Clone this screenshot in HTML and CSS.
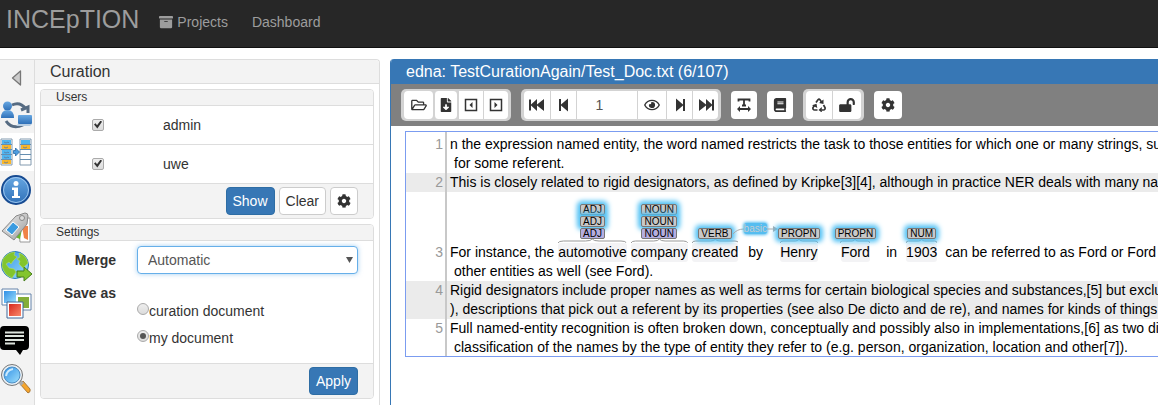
FILE: index.html
```html
<!DOCTYPE html>
<html lang="en">
<head>
<meta charset="utf-8">
<title>INCEpTION - Curation</title>
<link rel="stylesheet" href="styles.css">
</head>
<body>
<svg class="defs" aria-hidden="true">
  <defs>
    <linearGradient id="blue" x1="0" y1="0" x2="0" y2="1"><stop offset="0" stop-color="#68a8e2"/><stop offset="1" stop-color="#2f70b8"/></linearGradient>
    <linearGradient id="sky" x1="0" y1="0" x2="1" y2="1"><stop offset="0" stop-color="#2f8fe6"/><stop offset="1" stop-color="#9fe0fb"/></linearGradient>
    <linearGradient id="steel" x1="0" y1="0" x2="1" y2="1"><stop offset="0" stop-color="#f2f2f2"/><stop offset="1" stop-color="#9a9a9a"/></linearGradient>
    <linearGradient id="red" x1="0" y1="0" x2="1" y2="1"><stop offset="0" stop-color="#d8281c"/><stop offset="1" stop-color="#f98a6c"/></linearGradient>
  </defs>
  <symbol id="cog" viewBox="0 0 512 512"><path d="M487.4 315.7l-42.6-24.6c4.3-23.2 4.3-47 0-70.2l42.6-24.6c4.9-2.8 7.1-8.6 5.5-14-11.1-35.6-30-67.8-54.7-94.6-3.8-4.1-10-5.1-14.8-2.3L380.8 110c-17.9-15.4-38.5-27.3-60.8-35.1V25.8c0-5.6-3.9-10.5-9.4-11.7-36.7-8.2-74.3-7.8-109.2 0-5.5 1.2-9.4 6.1-9.4 11.7V75c-22.2 7.9-42.8 19.8-60.8 35.1L88.7 85.5c-4.9-2.8-11-1.9-14.8 2.3-24.7 26.7-43.6 58.9-54.7 94.6-1.7 5.4.6 11.2 5.5 14L67.3 221c-4.3 23.2-4.3 47 0 70.2l-42.6 24.6c-4.9 2.8-7.1 8.6-5.5 14 11.1 35.6 30 67.8 54.7 94.6 3.8 4.1 10 5.1 14.8 2.3l42.6-24.6c17.9 15.4 38.5 27.3 60.8 35.1v49.2c0 5.6 3.9 10.5 9.4 11.7 36.7 8.2 74.3 7.8 109.2 0 5.5-1.2 9.4-6.1 9.4-11.7v-49.2c22.2-7.9 42.8-19.8 60.8-35.1l42.6 24.6c4.9 2.8 11 1.9 14.8-2.3 24.7-26.7 43.6-58.9 54.7-94.6 1.5-5.5-.7-11.3-5.6-14.1zM256 336c-44.1 0-80-35.9-80-80s35.9-80 80-80 80 35.9 80 80-35.9 80-80 80z"/></symbol>
  <symbol id="brace" viewBox="0 0 100 5" preserveAspectRatio="none"><path vector-effect="non-scaling-stroke" fill="none" d="M0 5Q1 2.500 8 2.500H40Q48 2.500 50 0Q52 2.500 60 2.500H92Q99 2.500 100 5"/></symbol>
</svg>

<header class="topbar">
  <a class="brand" href="#">INCEpTION</a>
  <nav class="topnav">
    <a href="#"><svg class="icon" viewBox="0 0 512 512"><path d="M32 448c0 17.7 14.3 32 32 32h384c17.700 0 32-14.300 32-32V160H32v288zm160-212c0-6.600 5.400-12 12-12h104c6.600 0 12 5.400 12 12v8c0 6.600-5.400 12-12 12H204c-6.600 0-12-5.400-12-12v-8zM480 32H32C14.300 32 0 46.300 0 64v48c0 8.800 7.200 16 16 16h480c8.800 0 16-7.200 16-16V64c0-17.700-14.300-32-32-32z"/></svg>Projects</a>
    <a href="#">Dashboard</a>
  </nav>
</header>

<main class="workspace">
  <aside class="tabs">
    <button class="tab collapse" aria-label="Collapse"><svg viewBox="0 0 32 32"><path d="M20.500 8V22L12.500 15Z" fill="#ccc" stroke="#777" stroke-width="1.300" stroke-linejoin="round"/></svg></button>
    <button class="tab" aria-label="Open document"><svg viewBox="0 0 32 32"><path d="M12 7Q20 3 26 11M28 15V9l-7 3M6 23Q12 32 23 27" fill="none" stroke="#566b82" stroke-width="3"/><circle cx="7.500" cy="8" r="4.500" fill="url(#blue)"/><path d="M1 20Q1 12 7.500 12Q14 12 14 20Z" fill="url(#blue)"/><rect x="18" y="17" width="14" height="9" rx="1" fill="url(#blue)"/><path d="M18 26l-2 2h14l2-2z" fill="#b7cde2"/></svg></button>
    <button class="tab active" aria-label="Curation"><svg viewBox="0 0 32 32"><path d="M1 3h11v26H1zM20 3h11v26H20z" fill="#fff" stroke="#829aaf"/><path d="M2 4h9v4H2zM2 14h9v4H2zM2 19h9v4H2zM21 4h9v4h-9z" fill="#50b5f0"/><path d="M2 9h9v4H2zM2 24h9v4H2zM21 9h9v4h-9z" fill="#f8b62c"/><path d="M1 8.500h11M1 13.500h11M1 18.500h11M1 23.500h11M20 8.500h11M20 13.500h11M20 18.500h11M20 23.500h11" stroke="#658eb0"/><path d="M4 6l2 1 2-1 1 1M4 16l2 1 2-1 1 1M4 21l2 1 2-1 1 1M4 11l2 1 2-1M4 26l2 1 2-1M23 11l2 1 2-1" fill="none" stroke="#5778a0" stroke-width=".8"/><path d="M13.500 14.500h2V12l4 4-4 4v-2.500h-2z" fill="#4d9de0" stroke="#2668a7" stroke-width=".8"/></svg></button>
    <button class="tab" aria-label="Document info"><svg viewBox="0 0 32 32"><circle cx="16" cy="16" r="14" fill="url(#blue)" stroke="#174b92" stroke-width="2"/><circle cx="16" cy="16" r="12.500" fill="none" stroke="#9dc6ef"/><circle cx="16" cy="9.500" r="2.500" fill="#fff"/><path d="M12 13.500h6V22h2v2h-8v-2h2v-6h-2z" fill="#fff"/></svg></button>
    <button class="tab" aria-label="Layer"><svg viewBox="0 0 32 32"><path d="M18 6h12v24H20z" fill="#fff" stroke="#999"/><path d="M22 14h6v14l-4-2z" fill="#f08348"/><path d="M16 14l6 3-2 10-5-2z" fill="#69b72e"/><path d="M16 4L25 1Q28 1 28 4L27 12L14 28L2 19Z" fill="url(#steel)" stroke="#888"/><path d="M13 10l6 5-7 8-6-5z" fill="#3a9be0" stroke="#fff"/><circle cx="22" cy="6" r="2.500" fill="#ddd" stroke="#888"/></svg></button>
    <button class="tab" aria-label="Export"><svg viewBox="0 0 32 32"><circle cx="15" cy="15" r="13.500" fill="url(#sky)" stroke="#2578b8"/><path d="M3 9Q8 2 15 2l-1 3 3 2-4 4-2 3-2-2-3 2 3 4 5 1 2 3-4 6Q4 25 2 16zM19 3Q26 5 28 13l-5 5-4-4 1-3-3-2 3-2z" fill="#82c52d" stroke="#b8df62" stroke-width=".6"/><path d="M17 21h7v-4l8 7-8 7v-4h-7z" fill="#83c52d" stroke="#477f1c"/></svg></button>
    <button class="tab" aria-label="Images"><svg viewBox="0 0 32 32"><g fill="#fff" stroke="#6583aa"><path d="M2 1h16v16H2z"/><path d="M15 6h16v16H15z"/></g><path d="M4 3h12v12H4z" fill="url(#sky)"/><path d="M18 9h11v11H18z" fill="#83ad38"/><path d="M7 14h16v16H7z" fill="#fff" stroke="#3f6798"/><path d="M9 16h12v12H9z" fill="url(#red)"/></svg></button>
    <button class="tab" aria-label="Comments"><svg viewBox="0 0 32 32"><path d="M4 0h21q4 0 4 4v16q0 4-4 4h-2l-3 5-4-5H4q-4 0-4-4V4q0-4 4-4z"/><path d="M5 6.500h19M5 10h19M5 14h19M5 17.500h10" stroke="#dde3dd" stroke-width="1.800"/></svg></button>
    <button class="tab" aria-label="Search"><svg viewBox="0 0 32 32"><path d="M20 20l3-3 7 8q1 3-2 4z" fill="#f6a52b" stroke="#a7783c"/><path d="M18 18l3-2 3 3-3 3z" fill="#aaa"/><circle cx="12" cy="11" r="10.500" fill="#e8eff5" stroke="#777"/><circle cx="12" cy="11" r="8" fill="url(#sky)" stroke="#4c8fc5"/><path d="M6 12Q7 6 13 5" stroke="#cceafd" stroke-width="2" fill="none"/></svg></button>
  </aside>

  <section class="curation">
    <h2 class="curation-title">Curation</h2>
    <div class="curation-body">
      <section class="card">
        <h3 class="card-title">Users</h3>
        <label class="user"><input class="check" type="checkbox" checked><span>admin</span></label>
        <label class="user"><input class="check" type="checkbox" checked><span>uwe</span></label>
        <footer class="card-foot">
          <button class="btn primary">Show</button>
          <button class="btn">Clear</button>
          <button class="btn square" aria-label="User settings"><svg class="icon"><use href="#cog"/></svg></button>
        </footer>
      </section>
      <section class="card">
        <h3 class="card-title">Settings</h3>
        <div class="form">
          <label class="form-label" for="merge">Merge</label>
          <div class="select-wrap"><select id="merge" class="select"><option>Automatic</option></select></div>
          <span class="form-label" id="save">Save as</span>
          <div class="radios" role="radiogroup" aria-labelledby="save">
            <label><input class="radio" type="radio" name="save">curation document</label>
            <label><input class="radio" type="radio" name="save" checked>my document</label>
          </div>
        </div>
        <footer class="card-foot"><button class="btn primary">Apply</button></footer>
      </section>
    </div>
  </section>

  <section class="document">
    <h1 class="doc-title">edna: TestCurationAgain/Test_Doc.txt (6/107)</h1>
    <div class="toolbar">
      <div class="group">
        <button class="tool wide split" aria-label="Open"><svg class="icon folder" viewBox="0 0 576 512"><path d="M527.900 224H480v-48c0-26.500-21.500-48-48-48H272l-64-64H48C21.500 64 0 85.500 0 112v288c0 26.500 21.500 48 48 48h400c16.500 0 31.900-8.500 40.700-22.600l79.900-128c20-31.900-3-73.400-40.700-73.400zM48 118c0-3.300 2.700-6 6-6h134.100l64 64H426c3.300 0 6 2.700 6 6v42H152c-16.800 0-32.400 8.800-41.100 23.200L48 351.400zm400 282H72l77.200-128H528z"/></svg></button>
        <button class="tool slim split" aria-label="Export"><svg class="icon" viewBox="0 0 384 512"><path d="M224 136V0H24C10.700 0 0 10.700 0 24v464c0 13.300 10.700 24 24 24h336c13.300 0 24-10.700 24-24V160H248c-13.200 0-24-10.800-24-24zm76.450 211.360l-96.420 95.700c-6.650 6.610-17.390 6.610-24.040 0l-96.420-95.700C73.420 337.290 80.540 320 94.820 320H160v-80c0-8.840 7.160-16 16-16h32c8.840 0 16 7.160 16 16v80h65.180c14.280 0 21.400 17.290 11.270 27.360zM377 105L279.100 7c-4.500-4.500-10.600-7-17-7H256v128h128v-6.100c0-6.300-2.500-12.400-7-16.900z"/></svg></button>
        <button class="tool narrow" aria-label="Previous document"><svg class="icon" viewBox="0 0 14 14"><path d="M1.500 1.500h11v11h-11z" fill="none" stroke="#333" stroke-width="1.500"/><path d="M8.500 4v6l-3-3z"/></svg></button>
        <button class="tool narrow" aria-label="Next document"><svg class="icon" viewBox="0 0 14 14"><path d="M1.500 1.500h11v11h-11z" fill="none" stroke="#333" stroke-width="1.500"/><path d="M5.500 4v6l3-3z"/></svg></button>
      </div>
      <div class="group">
        <button class="tool" aria-label="First page"><svg class="icon large" viewBox="0 0 16 16"><path d="M0 2.500h2v5l6-5.500v5.500L15 2v12L8 8.500V14L2 8.500v5H0z"/></svg></button>
        <button class="tool" aria-label="Previous page"><svg class="icon large" viewBox="0 0 16 16"><path d="M3 2h2v5.500L12 1.500v13L5 8.500V14H3z"/></svg></button>
        <input class="page" type="text" value="1" aria-label="Page">
        <button class="tool wide" aria-label="Go to page"><svg class="icon folder" viewBox="0 0 576 512"><path d="M288 144a110.940 110.940 0 0 0-31.240 5 55.400 55.400 0 0 1 7.240 27 56 56 0 0 1-56 56 55.400 55.400 0 0 1-27-7.240A111.710 111.710 0 1 0 288 144zm284.520 97.400C518.290 135.590 410.930 64 288 64S57.680 135.640 3.480 241.410a32.350 32.350 0 0 0 0 29.190C57.710 376.410 165.070 448 288 448s230.320-71.640 284.520-177.410a32.350 32.350 0 0 0 0-29.190zM288 400c-98.650 0-189.090-55-237.930-144C98.910 167 189.340 112 288 112s189.090 55 237.930 144C477.100 345 386.660 400 288 400z"/></svg></button>
        <button class="tool" aria-label="Next page"><svg class="icon large" viewBox="0 0 16 16"><path d="M13 2h-2v5.500L4 1.500v13l7-6V14h2z"/></svg></button>
        <button class="tool" aria-label="Last page"><svg class="icon large" viewBox="0 0 16 16"><path d="M16 2.500h-2v5L8 2v5.500L1 2v12l7-5.500V14l6-5.500v5h2z"/></svg></button>
      </div>
      <button class="tool solo" aria-label="Text direction"><svg class="icon" viewBox="0 0 14 14"><path d="M1.500 3.500V1.500h11v2M7 1.500v6M5 7.500h4" fill="none" stroke="#333" stroke-width="1.800"/><path d="M3 10h8V8l3 3-3 3v-2H3v2l-3-3 3-3z"/></svg></button>
      <button class="tool solo" aria-label="Guidelines"><svg class="icon" viewBox="0 0 448 512"><path d="M448 360V24c0-13.300-10.700-24-24-24H96C43 0 0 43 0 96v320c0 53 43 96 96 96h328c13.300 0 24-10.700 24-24v-16c0-7.500-3.500-14.300-8.900-18.700-4.200-15.400-4.200-59.300 0-74.700 5.400-4.300 8.900-11.100 8.900-18.600zM128 134c0-3.300 2.700-6 6-6h212c3.300 0 6 2.700 6 6v20c0 3.300-2.700 6-6 6H134c-3.300 0-6-2.700-6-6v-20zm0 64c0-3.300 2.700-6 6-6h212c3.300 0 6 2.700 6 6v20c0 3.300-2.700 6-6 6H134c-3.300 0-6-2.700-6-6v-20zm253.400 250H96c-17.700 0-32-14.300-32-32 0-17.600 14.400-32 32-32h285.400c-1.900 17.100-1.900 46.900 0 64z"/></svg></button>
      <div class="group">
        <button class="tool" aria-label="Re-merge"><svg class="icon" viewBox="0 0 14 14"><path d="M4 4.500L6 1.700Q7 .5 8 1.700L9.500 4M11.500 7L13 9.500Q13.500 12 11.300 12H9.500M5.500 12H2.700Q.5 12 1 9.500L2.500 7.500" fill="none" stroke="#333" stroke-width="1.700"/><path d="M11.500 1.500V6L7 5zM9.800 9v5.500L6.500 12zM0 7.200L4.500 5.700l.8 4.300z"/></svg></button>
        <button class="tool wide" aria-label="Finish document"><svg class="icon folder" viewBox="0 0 576 512"><path d="M423.500 0C339.500.3 272 69.500 272 153.500V224H48c-26.500 0-48 21.500-48 48v192c0 26.500 21.500 48 48 48h352c26.500 0 48-21.500 48-48V272c0-26.500-21.500-48-48-48h-48v-71.100c0-39.600 31.700-72.500 71.300-72.900 40-.4 72.700 32.100 72.700 72v80c0 13.300 10.700 24 24 24h32c13.300 0 24-10.700 24-24v-80C576 68 507.500-.3 423.500 0z"/></svg></button>
      </div>
      <button class="tool solo cog" aria-label="Settings"><svg class="icon"><use href="#cog"/></svg></button>
    </div>

    <div class="text">
      <div class="row"><span class="num">1</span><div class="lines"><p>n the expression named entity, the word named restricts the task to those entities for which one or many strings, such</p><p class="wrap">for some referent.</p></div></div>
      <div class="row odd"><span class="num">2</span><div class="lines"><p>This is closely related to rigid designators, as defined by Kripke[3][4], although in practice NER deals with many names</p></div></div>
      <div class="row tagged"><span class="num">3</span><div class="lines">
        <div class="tokens">
          <span class="plain">For instance, the</span>
          <span class="token"><span class="tags"><i class="tag">ADJ</i><i class="tag">ADJ</i><i class="tag merged">ADJ</i></span><svg class="brace"><use href="#brace"/></svg><span class="word">automotive</span></span>
          <span class="token"><span class="tags"><i class="tag">NOUN</i><i class="tag">NOUN</i><i class="tag merged">NOUN</i></span><svg class="brace"><use href="#brace"/></svg><span class="word">company</span></span>
          <span class="token"><span class="tags"><i class="tag">VERB</i></span><svg class="brace"><use href="#brace"/></svg><span class="word">created</span>
            <span class="arc"><svg class="arc-start" viewBox="0 0 11 12"><path d="M0 8Q4 3 11 3"/></svg><span class="arc-label">basic</span><svg class="arc-end" viewBox="0 0 11 12"><path d="M0 3H8"/><path class="head" d="M6 0l5 3-5 3z"/></svg></span>
          </span>
          <span class="plain by">by</span>
          <span class="token henry"><span class="tags"><i class="tag">PROPN</i></span><svg class="brace"><use href="#brace"/></svg><span class="word">Henry</span></span>
          <span class="token ford"><span class="tags"><i class="tag">PROPN</i></span><svg class="brace"><use href="#brace"/></svg><span class="word">Ford</span></span>
          <span class="plain in">in</span>
          <span class="token year"><span class="tags"><i class="tag">NUM</i></span><svg class="brace"><use href="#brace"/></svg><span class="word">1903</span></span>
          <span class="plain rest">can be referred to as Ford or Ford Motor</span>
        </div>
        <p class="wrap">other entities as well (see Ford).</p></div></div>
      <div class="row odd"><span class="num">4</span><div class="lines"><p>Rigid designators include proper names as well as terms for certain biological species and substances,[5] but exclude</p><p>), descriptions that pick out a referent by its properties (see also De dicto and de re), and names for kinds of things</p></div></div>
      <div class="row"><span class="num">5</span><div class="lines"><p>Full named-entity recognition is often broken down, conceptually and possibly also in implementations,[6] as two distinct</p><p class="wrap">classification of the names by the type of entity they refer to (e.g. person, organization, location and other[7]).</p></div></div>
    </div>
  </section>
</main>
</body>
</html>
```
FILE: styles.css
```css
* { box-sizing: border-box; }
body {
  margin: 0;
  min-height: 100vh;
  display: flex;
  flex-direction: column;
  background: #fff;
  color: #333;
  font: 14px/20px "Liberation Sans", Arial, sans-serif;
  overflow-x: hidden;
}
button, input, select { font: inherit; color: inherit; margin: 0; }
h1, h2, h3, p { margin: 0; font-weight: normal; }
.defs { position: absolute; width: 0; height: 0; }
.icon { display: block; width: 14px; height: 14px; fill: #333; }
.folder { width: 16px; }
.large { width: 16px; height: 16px; }

.topbar {
  display: flex;
  gap: 20px;
  height: 48px;
  padding-left: 6px;
  background: #272727;
  border-bottom: 1px solid #111;
}
.topbar a { color: #9d9d9d; text-decoration: none; }
.brand { font-size: 25px; line-height: 38px; }
.topnav { display: flex; gap: 24px; line-height: 44px; }
.topnav a { display: flex; align-items: center; gap: 4px; height: 44px; }
.topnav .icon { fill: #9d9d9d; }

.workspace { flex: 1; display: flex; margin-top: 11px; min-height: 0; }
.tabs {
  width: 35px;
  flex: none;
  display: flex;
  flex-direction: column;
  background: #f3f3f3;
  border-top: 1px solid #ddd;
  border-right: 1px solid #ddd;
}
.tab { height: 38px; padding: 3px 0; border: 0; background: none; }
.tab.collapse { height: 35px; }
.tab.active { background: #fff; }
.tab svg { display: block; width: 32px; height: 32px; }

.curation {
  flex: 0 0 345px;
  border: 1px solid #ddd;
  border-width: 1px 1px 0 0;
  border-radius: 0 4px 0 0;
}
.curation-title {
  padding-left: 15px;
  font-size: 16px;
  line-height: 23px;
  background: #f3f3f3;
  border-bottom: 1px solid #ddd;
  border-radius: 0 4px 0 0;
}
.curation-body { display: flex; flex-direction: column; gap: 5px; padding: 5px 5px 0; }
.card { border: 1px solid #ddd; border-radius: 4px; overflow: hidden; }
.card-title {
  padding-left: 15px;
  font-size: 12px;
  line-height: 15px;
  background: #f3f3f3;
  border-bottom: 1px solid #ddd;
}
.user {
  display: flex;
  align-items: center;
  gap: 59px;
  height: 39px;
  padding: 0 0 1px 51px;
  border-bottom: 1px solid #ddd;
}
.check, .radio {
  appearance: none;
  flex: none;
  width: 12px;
  height: 12px;
  border: 1px solid #aaa;
  border-radius: 2px;
  background: linear-gradient(#eee, #dcdcdc);
  display: grid;
  place-items: center;
}
.check:checked::before {
  content: "";
  width: 8px;
  height: 8px;
  background: #333;
  clip-path: polygon(0 50%, 20% 35%, 38% 60%, 82% 0, 100% 16%, 42% 100%);
}
.radio { border-radius: 50%; }
.radio:checked::before { content: ""; width: 6px; height: 6px; border-radius: 50%; background: #555; }
.card-foot {
  display: flex;
  justify-content: flex-end;
  gap: 4px;
  padding: 3px 15px;
  background: #f3f3f3;
}
.btn {
  height: 28px;
  padding: 0 6px;
  line-height: 20px;
  border: 1px solid #ccc;
  border-radius: 4px;
  background: #fff;
}
.btn.primary { color: #fff; background: #3777b5; border-color: #2e6da4; }
.btn.square { width: 28px; }
.form {
  display: grid;
  grid-template-columns: 75px 1fr;
  column-gap: 21px;
  row-gap: 9px;
  padding: 5px 15px 15px 0;
  border-bottom: 1px solid #ddd;
}
.form-label { font-weight: bold; line-height: 28px; text-align: right; }
.form > span.form-label { line-height: 20px; }
.select-wrap { display: grid; align-items: center; }
.select {
  grid-area: 1 / 1;
  appearance: none;
  width: 100%;
  height: 28px;
  padding: 0 10px;
  color: #555;
  border: 1px solid #66afe9;
  border-radius: 4px;
  background: #fff;
  box-shadow: 0 0 5px #66afe999;
}
.select-wrap::after {
  content: "";
  grid-area: 1 / 1;
  justify-self: end;
  width: 7px;
  height: 6px;
  margin-right: 5px;
  background: #555;
  clip-path: polygon(0 0, 100% 0, 50% 100%);
  pointer-events: none;
}
.radios { display: grid; gap: 7px; padding-top: 18px; }
.radios label { display: flex; }
.radio { margin-top: 2px; }

.document {
  flex: 1;
  min-width: 0;
  margin-left: 10px;
  border-left: 1px solid #3777b5;
  border-radius: 4px 0 0 0;
  overflow: hidden;
}
.doc-title { padding-left: 15px; color: #fff; background: #3777b5; font-size: 16px; line-height: 25px; }
.toolbar {
  display: flex;
  align-items: center;
  gap: 10px;
  height: 42px;
  padding-left: 10px;
  background: #808080;
}
.group { display: flex; padding: 2px 3px; border-radius: 5px; background: #d3d3d3; }
.tool {
  display: grid;
  place-items: center;
  width: 26px;
  height: 28px;
  padding: 0;
  border: 0;
  border-left: 1px solid #d3d3d3;
  background: #fff;
}
.tool.wide { width: 29px; }
.tool.slim { width: 23px; }
.tool.narrow { width: 25px; }
.group .tool:first-child { border-left: 0; border-radius: 4px 0 0 4px; }
.group .tool:last-child { border-radius: 0 4px 4px 0; }
.group .tool.split { border-radius: 4px; margin-right: 1px; }
.tool.solo { border: 0; border-radius: 4px; }
.tool.cog { width: 28px; }
.page {
  width: 61px;
  height: 28px;
  padding: 0 15px 0 0;
  text-align: center;
  color: #555;
  background: #fff;
  border: 0;
  border-left: 1px solid #d3d3d3;
}

.text {
  margin: 5px 0 0 14px;
  border: 1px solid #7b9cf0;
  border-right: 0;
  color: #000;
  line-height: 19px;
  white-space: nowrap;
  overflow: hidden;
}
.row { display: flex; }
.row:first-child { padding-top: 3px; }
.row:last-child { margin-bottom: -1px; }
.odd { background: #ebebeb; }
.num {
  flex: none;
  width: 41px;
  padding-right: 2px;
  text-align: right;
  color: #999;
  border-right: 2px solid #c8c8c8;
}
.row:first-child .num { margin-top: -3px; padding-top: 3px; }
.lines { padding-left: 3px; }
.wrap { padding-left: 4px; }
.tagged .num { padding-top: 51px; }
.tokens { display: flex; align-items: flex-end; gap: 4px; height: 70px; }
.token { position: relative; display: flex; flex-direction: column; align-items: center; }
.tags { display: grid; gap: 1px; }
.tag {
  position: relative;
  padding: 0 2px;
  font: 10px/9px "Liberation Sans", Arial, sans-serif;
  text-align: center;
  border: 1px solid #777;
  border-radius: 2px;
  background: #c8c8c8;
  box-shadow: 0 0 5px 3px #4fc0f4;
}
.tag.merged { background: #b5aee0; box-shadow: none; }
.brace { display: block; width: 100%; height: 4px; stroke: #999; }
.word { background: #f3f3f5; border-radius: 3px; line-height: 19px; }
.by { margin: 0 11px 0 6px; }
.henry .brace { width: 38px; }
.ford .brace { width: 30px; }
.ford { margin-left: 11px; }
.in { margin: 0 5px 0 6px; }
.rest { margin-left: 4px; }
.arc {
  position: absolute;
  left: 41px;
  top: -5px;
  display: flex;
  align-items: flex-start;
}
.arc svg { width: 11px; height: 12px; margin-top: 3px; fill: none; stroke: #aaa; flex: none; }
.arc .head { fill: #aaa; stroke: none; }
.arc-label {
  font-size: 10px;
  line-height: 11px;
  color: #c3ccd0;
  background: #55bdf0;
  border-radius: 3px;
  box-shadow: 0 0 3px 1px #55bdf0;
}
```
